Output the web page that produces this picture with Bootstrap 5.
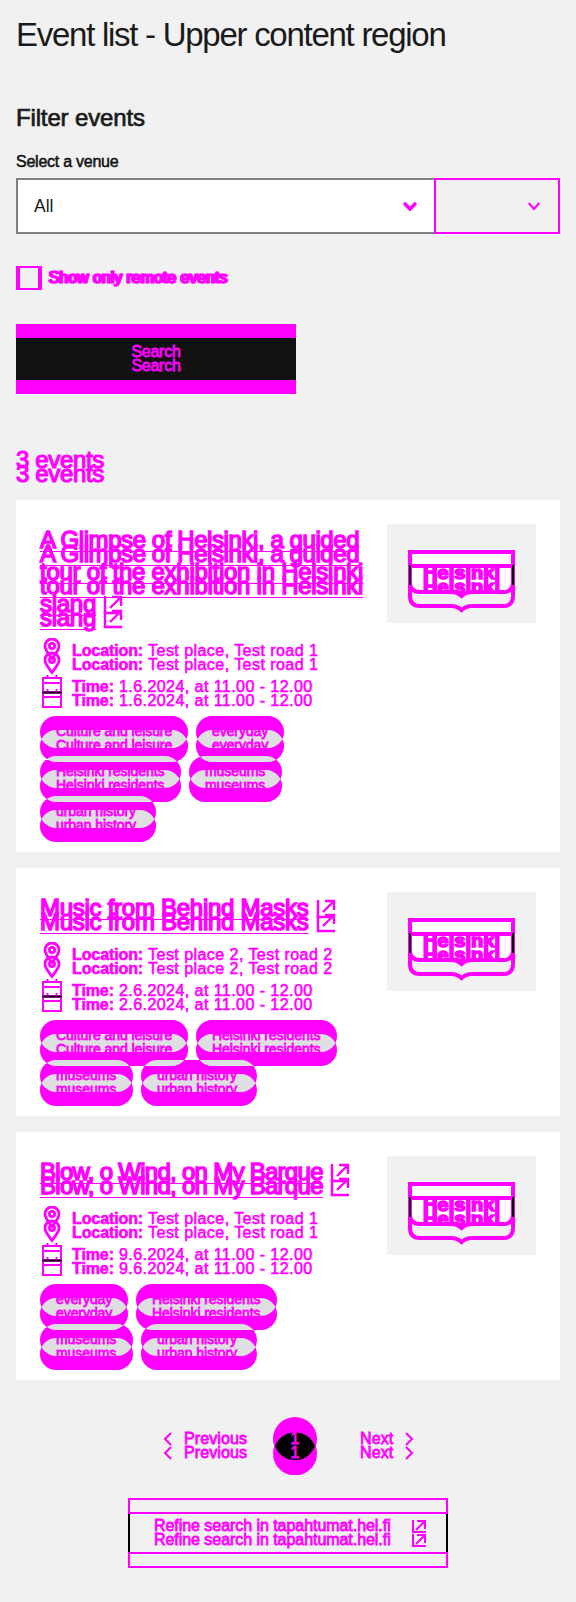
<!DOCTYPE html>
<html lang="en">
<head>
<meta charset="utf-8">
<meta name="viewport" content="width=device-width, initial-scale=1">
<title>Event list - Upper content region</title>
<link href="https://cdn.jsdelivr.net/npm/bootstrap@5.3.0/dist/css/bootstrap.min.css" rel="stylesheet">
<style>
  :root { --hot: #ff00ff; --ink: #1a1a1a; }
  body { background: #f1f1f1; color: var(--ink); font: 16px/24px "Liberation Sans", Arial, sans-serif; }
  .page { width: 576px; height: 1602px; padding: 15px 16px 0; overflow: hidden; }
  svg { display: block; }
  h1 { font-size: 33px; line-height: 40px; font-weight: 400; letter-spacing: -1.27px; margin: 0; }
  h2, h3 { font-size: 24px; line-height: 32px; font-weight: 400; margin: 0; -webkit-text-stroke: .7px; white-space: nowrap; }
  .filter-title { margin-top: 47px; letter-spacing: -.15px; }
  .venue-label { margin-top: 16px; letter-spacing: -.25px; -webkit-text-stroke: .5px; color: #111; }

  /* a block printed twice, the second copy 14px lower */
  .dup { display: grid; justify-items: start; color: var(--hot); -webkit-text-stroke: .8px var(--hot); white-space: nowrap; }
  .dup > * { grid-area: 1 / 1; }
  .dup > :first-child { padding-bottom: 14px; }
  .dup > :last-child { padding-top: 14px; }
  .hot-icon { stroke: var(--hot); fill: none; stroke-width: 2; overflow: visible; }

  .venue { margin-top: 4px; height: 56px; }
  .venue-value { width: 418px; border: 2px solid #808080; border-right: 0; background: #fff; font-size: 17.5px; padding: 0 17px 0 16px; }
  .venue-extra { border: 2px solid var(--hot); padding-right: 18px; }
  .remote { margin-top: 32px; height: 24px; gap: 6px; }
  .tick { width: 26px; height: 24px; border: solid var(--hot); border-width: 2px 4px; }
  .dup.side { -webkit-text-stroke-width: 1.1px; letter-spacing: -.05px; }
  .dup.side > :first-child { padding: 0; }
  .dup.side > :last-child { padding: 0 0 0 1.5px; }
  .go { width: 280px; height: 70px; margin-top: 34px; border: solid var(--hot); border-width: 14px 0; background: #111; padding-top: 2px; letter-spacing: -.25px; }
  .go .dup { margin-top: -12px; padding-top: 12px; }
  .count { margin: 50px 0 10px; letter-spacing: -.35px; -webkit-text-stroke-width: 1.2px; }
  .event { background: #fff; padding: 24px 24px 10px; margin-bottom: 16px; }
  .event h3 { letter-spacing: -.27px; -webkit-text-stroke: 1.5px var(--hot); }
  .event h3.tight { letter-spacing: -.72px; }
  .event-link { color: var(--hot); text-decoration: underline 1px; text-underline-offset: 3px; text-decoration-skip-ink: none; }
  .event-link .first-line { letter-spacing: -.42px; }
  .event h3 svg { display: inline-block; vertical-align: -2px; margin-left: 8px; stroke-width: 2.4; }
  .facts { margin-top: 4px; }
  .fact { height: 36px; gap: 8px; letter-spacing: .45px; }
  .fact svg { width: 24px; height: 38px; }
  .fact .dup { margin-top: 1px; }
  .fact b { letter-spacing: -.1px; -webkit-text-stroke-width: .6px; }
  .fact b + span { margin-left: 5px; -webkit-text-stroke: .6px var(--hot); }
  .tags { margin-top: 6px; width: 300px; column-gap: 8px; font-size: 14px; line-height: 20px; isolation: isolate; letter-spacing: -.07px; }
  .tags > svg { position: absolute; inset: 0; z-index: -1; overflow: visible; }
  .tag { height: 40px; padding: 5px 0 0 16px; }
  .tag.w88 { width: 88px; } .tag.w93 { width: 93px; } .tag.w116 { width: 116px; } .tag.w141 { width: 141px; } .tag.w148 { width: 148px; }
  .tags.rows-2 { height: 86px; } .tags.rows-3 { height: 126px; }
  .tags .dup { -webkit-text-stroke-width: .8px; }
  .photo { width: 149px; height: 99px; background: #f1f1f1; }
  .pager { margin: 37px 0 0 148px; height: 58px; letter-spacing: .1px; }
  .pager > .dup { padding-top: 10px; }
  .pager .hot-icon { height: 38px; }
  .current { width: 44px; }
  .refine { width: 320px; height: 70px; margin: 23px 0 0 112px; }
</style>
</head>
<body>
<svg width="0" height="0" class="position-absolute" aria-hidden="true">
  <defs>
    <symbol id="pin" viewBox="0 0 24 38"><g id="pin1" fill="none" stroke="#f0f" stroke-width="2.8"><path d="M12 20.500C9 16 5 12.500 5 8a7 7 0 0 1 14 0c0 4.500-4 8-7 12.500z"/><circle cx="12" cy="8" r="2.600"/></g><use href="#pin1" y="14"/></symbol>
    <symbol id="cal" viewBox="0 0 24 38"><g id="cal1" fill="none" stroke="#f0f" stroke-width="2"><path d="M3 4h18v15H3zM3 9h18M7.500 1v3M16.500 1v3"/></g><use href="#cal1" y="14"/><path d="M2 18.500h20" stroke="#111" stroke-width="2"/></symbol>
    <symbol id="shield" viewBox="0 0 149 99">
      <path d="M23 28H126V58Q126 68 116 68H85Q79 68 74.500 72Q70 68 64 68H33Q23 68 23 58z" fill="#fff"/>
      <g id="shield1" fill="none" stroke="#f0f" stroke-width="4"><path d="M23 28H126V58Q126 68 116 68H85Q79 68 74.500 72Q70 68 64 68H33Q23 68 23 58z"/></g>
      <use href="#shield1" y="14"/>
      <path d="M23 41V61M126 41V61" stroke="#000" stroke-width="2"/>
    </symbol>
  </defs>
</svg>

<main class="page">
  <h1>Event list - Upper content region</h1>
  <h2 class="filter-title">Filter events</h2>
  <div class="venue-label">Select a venue</div>
  <div class="venue d-flex">
    <div class="venue-value d-flex align-items-center justify-content-between"><span>All</span>
      <svg class="hot-icon" width="14" height="9" stroke-linecap="round"><path d="M2 2l5 5 5-5" style="stroke-width:3.600"/></svg></div>
    <div class="venue-extra flex-grow-1 d-flex align-items-center justify-content-end">
      <svg class="hot-icon" width="12" height="9"><path d="M.7 1l5.300 6 5.300-6"/></svg></div>
  </div>
  <div class="remote d-flex"><div class="tick"></div><div class="dup side"><span>Show only remote events</span></div></div>
  <div class="go d-flex justify-content-center"><div class="dup"><span>Search</span></div></div>
  <h2 class="count dup"><span>3 events</span></h2>

  <article class="event d-flex justify-content-between">
    <div>
      <h3 class="dup"><span><a class="event-link"><span class="first-line">A Glimpse of Helsinki, a guided</span><br>tour of the exhibition in Helsinki<br>slang</a><svg class="hot-icon" width="18" height="18"><path d="M1 0v17h17M6 12L16 2M8 1h9v9"/></svg></span></h3>
      <div class="facts">
        <div class="fact d-flex"><svg><use href="#pin"/></svg><div class="dup"><span><b>Location:</b><span>Test place, Test road 1</span></span></div></div>
        <div class="fact d-flex"><svg><use href="#cal"/></svg><div class="dup"><span><b>Time:</b><span>1.6.2024, at 11.00 - 12.00</span></span></div></div>
      </div>
      <div class="tags rows-3 d-flex flex-wrap align-content-start position-relative" data-pills>
        <div class="tag w148"><div class="dup"><span>Culture and leisure</span></div></div>
        <div class="tag w88"><div class="dup"><span>everyday</span></div></div>
        <div class="tag w141"><div class="dup"><span>Helsinki residents</span></div></div>
        <div class="tag w93"><div class="dup"><span>museums</span></div></div>
        <div class="tag w116"><div class="dup"><span>urban history</span></div></div>
      </div>
    </div>
    <div class="photo"><svg width="149" height="99"><use href="#shield"/><g fill="#f0f" stroke="#f0f" stroke-width="1.500" font-size="18" font-weight="700"><text x="36" y="55" textLength="77" lengthAdjust="spacingAndGlyphs">Helsinki</text><text x="36" y="69" textLength="77" lengthAdjust="spacingAndGlyphs">Helsinki</text></g></svg></div>
  </article>

  <article class="event d-flex justify-content-between">
    <div>
      <h3 class="dup"><span><a class="event-link">Music from Behind Masks</a><svg class="hot-icon" width="18" height="18"><path d="M1 0v17h17M6 12L16 2M8 1h9v9"/></svg></span></h3>
      <div class="facts">
        <div class="fact d-flex"><svg><use href="#pin"/></svg><div class="dup"><span><b>Location:</b><span>Test place 2, Test road 2</span></span></div></div>
        <div class="fact d-flex"><svg><use href="#cal"/></svg><div class="dup"><span><b>Time:</b><span>2.6.2024, at 11.00 - 12.00</span></span></div></div>
      </div>
      <div class="tags rows-2 d-flex flex-wrap align-content-start position-relative" data-pills>
        <div class="tag w148"><div class="dup"><span>Culture and leisure</span></div></div>
        <div class="tag w141"><div class="dup"><span>Helsinki residents</span></div></div>
        <div class="tag w93"><div class="dup"><span>museums</span></div></div>
        <div class="tag w116"><div class="dup"><span>urban history</span></div></div>
      </div>
    </div>
    <div class="photo"><svg width="149" height="99"><use href="#shield"/><g fill="#f0f" stroke="#f0f" stroke-width="1.500" font-size="18" font-weight="700"><text x="36" y="55" textLength="77" lengthAdjust="spacingAndGlyphs">Helsinki</text><text x="36" y="69" textLength="77" lengthAdjust="spacingAndGlyphs">Helsinki</text></g></svg></div>
  </article>

  <article class="event d-flex justify-content-between mb-0">
    <div>
      <h3 class="dup tight"><span><a class="event-link">Blow, o Wind, on My Barque</a><svg class="hot-icon" width="18" height="18"><path d="M1 0v17h17M6 12L16 2M8 1h9v9"/></svg></span></h3>
      <div class="facts">
        <div class="fact d-flex"><svg><use href="#pin"/></svg><div class="dup"><span><b>Location:</b><span>Test place, Test road 1</span></span></div></div>
        <div class="fact d-flex"><svg><use href="#cal"/></svg><div class="dup"><span><b>Time:</b><span>9.6.2024, at 11.00 - 12.00</span></span></div></div>
      </div>
      <div class="tags rows-2 d-flex flex-wrap align-content-start position-relative" data-pills>
        <div class="tag w88"><div class="dup"><span>everyday</span></div></div>
        <div class="tag w141 me-5"><div class="dup"><span>Helsinki residents</span></div></div>
        <div class="tag w93"><div class="dup"><span>museums</span></div></div>
        <div class="tag w116"><div class="dup"><span>urban history</span></div></div>
      </div>
    </div>
    <div class="photo"><svg width="149" height="99"><use href="#shield"/><g fill="#f0f" stroke="#f0f" stroke-width="1.500" font-size="18" font-weight="700"><text x="36" y="55" textLength="77" lengthAdjust="spacingAndGlyphs">Helsinki</text><text x="36" y="69" textLength="77" lengthAdjust="spacingAndGlyphs">Helsinki</text></g></svg></div>
  </article>

  <nav class="pager d-flex">
    <svg class="hot-icon" width="20" style="margin-top:16px"><path d="M7 0L1 6l6 6M7 14l-6 6 6 6"/></svg>
    <div class="dup" style="width:89px"><span>Previous</span></div>
    <div class="current d-grid">
      <svg width="44" height="58" style="grid-area:1/1"><circle cx="22" cy="22" r="22" fill="#f0f"/><circle cx="22" cy="36.500" r="22" fill="#f0f"/><path d="M2 29Q8 15.500 22 15.500T42 29Q36 43 22 43T2 29z"/></svg>
      <div class="dup justify-content-center" style="grid-area:1/1;padding-top:10px"><span>1</span></div>
    </div>
    <div class="dup" style="width:88px;padding-left:43px"><span>Next</span></div>
    <svg class="hot-icon" width="8" style="margin-top:16px"><path d="M1 0l6 6-6 6M1 14l6 6-6 6"/></svg>
  </nav>

  <div class="refine d-grid">
    <svg class="hot-icon" width="320" height="70" style="grid-area:1/1"><path d="M1 1h318v54H1zM1 15h318v54H1z"/><path d="M1 16v38M319 16v38" stroke="#000"/><path d="M285 22v12h13M288 32l9-9M289 23h8v8M285 36v12h13M288 46l9-9M289 37h8v8"/></svg>
    <div class="dup" style="grid-area:1/1;padding:16px 0 0 26px;letter-spacing:-.05px"><span>Refine search in tapahtumat.hel.fi</span></div>
  </div>
</main>

<script src="https://cdn.jsdelivr.net/npm/bootstrap@5.3.0/dist/js/bootstrap.bundle.min.js"></script>
<script>
  // add the second copy of every doubled block
  document.querySelectorAll('.dup').forEach(d => d.append(d.firstElementChild.cloneNode(true)));

  // pills behind the tags: grey where two overlap, magenta elsewhere
  document.querySelectorAll('[data-pills]').forEach(list => {
    const d = [...list.querySelectorAll('.tag')].map(t => [0, 14].map(dy => {
      const w = t.offsetWidth - 32;
      return `M${t.offsetLeft + 16} ${t.offsetTop + dy}h${w}a16 16 0 0 1 0 32h${-w}a16 16 0 0 1 0-32z`;
    }).join('')).join('');
    list.insertAdjacentHTML('beforeend', `<svg width="300" height="126"><path d="${d}" fill="#dedfe1"/><path d="${d}" fill="#f0f" fill-rule="evenodd"/></svg>`);
  });
</script>
</body>
</html>
